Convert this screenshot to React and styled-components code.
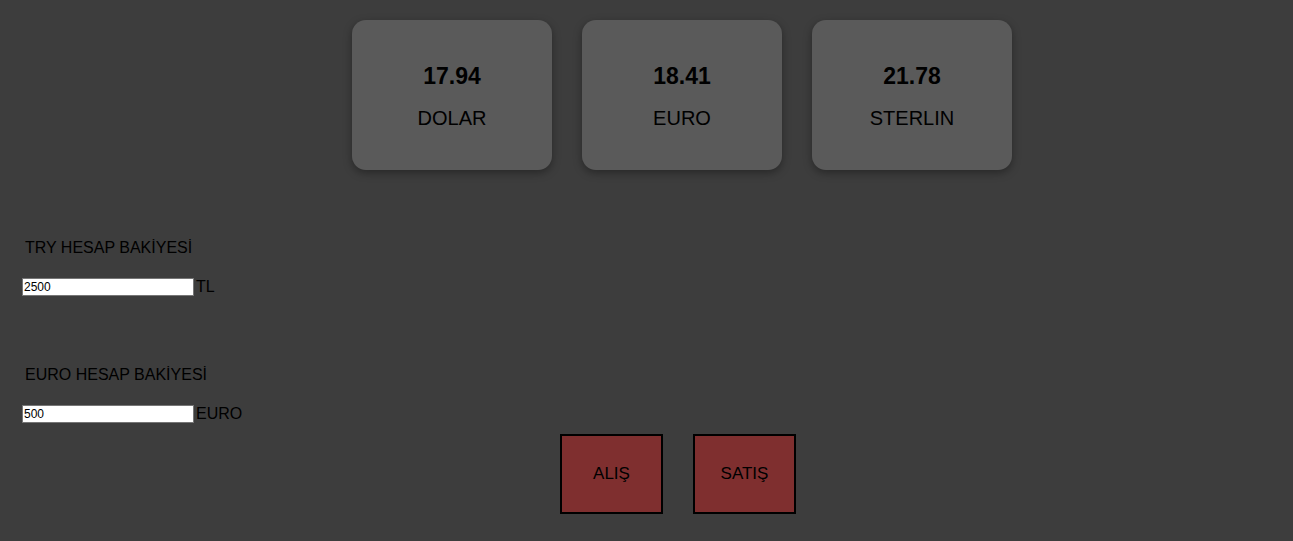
import React from "react";
import styled, { createGlobalStyle } from "styled-components";

const GlobalStyle = createGlobalStyle`
  body {
    margin: 0;
    background: #3d3d3d;
    font-family: "Liberation Sans", Arial, sans-serif;
    color: #000;
  }
`;

const Page = styled.div`
  min-height: 541px;
`;

const CardRow = styled.div`
  display: flex;
  justify-content: center;
  gap: 30px;
  padding: 20px 0 0 71px;
`;

const Card = styled.div`
  width: 200px;
  height: 150px;
  box-sizing: border-box;
  background: #5a5a5a;
  border-radius: 14px;
  box-shadow: 0 3px 8px rgba(0, 0, 0, 0.35);
  display: flex;
  flex-direction: column;
  align-items: center;
  padding-top: 42px;
`;

const Rate = styled.div`
  font-size: 23px;
  font-weight: bold;
  line-height: 28px;
`;

const Currency = styled.div`
  font-size: 20px;
  line-height: 24px;
  margin-top: 16px;
`;

const Balance = styled.div`
  display: flex;
  flex-direction: column;
  margin-top: ${(p) => p.$top}px;
`;

const Label = styled.div`
  font-size: 16px;
  line-height: 18px;
  padding-left: 25px;
`;

const InputRow = styled.div`
  display: flex;
  align-items: center;
  padding-left: 22px;
  margin-top: 21px;
  font-size: 16px;
`;

const Amount = styled.input`
  width: 172px;
  height: 18px;
  box-sizing: border-box;
  border: 1px solid #767676;
  padding: 0 1px;
  font-family: "Liberation Sans", Arial, sans-serif;
  font-size: 12px;
  color: #000;
  background: #fff;
  outline: none;
  margin-right: 2px;
`;

const ButtonRow = styled.div`
  display: flex;
  justify-content: center;
  gap: 30px;
  margin-top: 11px;
  padding-left: 63px;
`;

const TradeButton = styled.button`
  width: 103px;
  height: 80px;
  box-sizing: border-box;
  border: 2px solid #000;
  background: #7f2f2f;
  font-family: "Liberation Sans", Arial, sans-serif;
  font-size: 17px;
  color: #000;
  cursor: pointer;
`;

const rates = [
  { value: "17.94", name: "DOLAR" },
  { value: "18.41", name: "EURO" },
  { value: "21.78", name: "STERLIN" },
];

export default function App() {
  return (
    <Page>
      <GlobalStyle />
      <CardRow>
        {rates.map((r) => (
          <Card key={r.name}>
            <Rate>{r.value}</Rate>
            <Currency>{r.name}</Currency>
          </Card>
        ))}
      </CardRow>

      <Balance $top={69}>
        <Label>TRY HESAP BAKİYESİ</Label>
        <InputRow>
          <Amount defaultValue="2500" />
          TL
        </InputRow>
      </Balance>

      <Balance $top={70}>
        <Label>EURO HESAP BAKİYESİ</Label>
        <InputRow>
          <Amount defaultValue="500" />
          EURO
        </InputRow>
      </Balance>

      <ButtonRow>
        <TradeButton>ALIŞ</TradeButton>
        <TradeButton>SATIŞ</TradeButton>
      </ButtonRow>
    </Page>
  );
}
